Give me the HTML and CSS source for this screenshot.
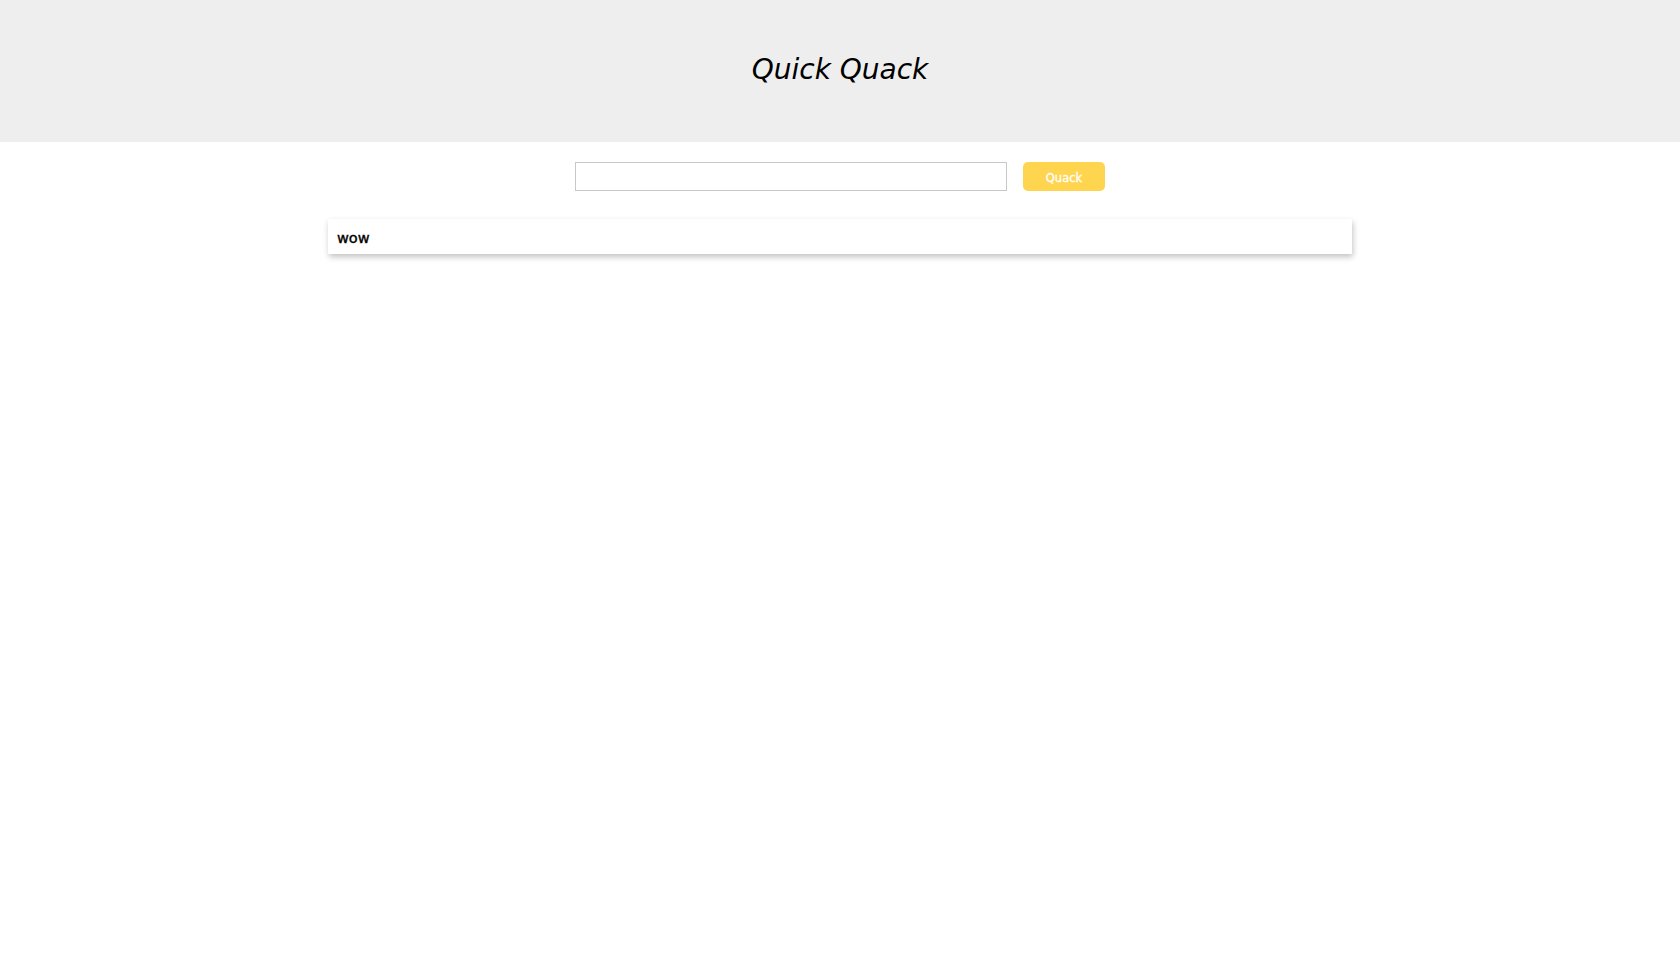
FILE: index.html
```html
<!DOCTYPE html>
<html>
<head>
<meta charset="utf-8">
<title>Quick Quack</title>
<link rel="stylesheet" href="styles.css">
</head>
<body>
<header class="header">
  <h1 class="title">Quick Quack</h1>
</header>
<main class="main">
  <form class="search">
    <input class="search-input" type="text">
    <button class="search-btn" type="button">Quack</button>
  </form>
  <div class="result">wow</div>
</main>
</body>
</html>
```
FILE: styles.css
```css
html, body {
  margin: 0;
  padding: 0;
  background: #ffffff;
}
body {
  font-family: "DejaVu Sans", Verdana, sans-serif;
  color: #000;
}
.header {
  background: #eeeeee;
  height: 142px;
  display: flex;
  align-items: center;
  justify-content: center;
}
.title {
  margin: 0;
  font-family: "DejaVu Sans", Verdana, sans-serif;
  font-style: italic;
  font-weight: normal;
  font-size: 28px;
  line-height: 1;
  padding-bottom: 2px;
}
.main {
  display: flex;
  flex-direction: column;
  align-items: center;
  padding-bottom: 40px;
}
.search {
  margin: 20px 0 0;
  display: flex;
  gap: 16px;
  align-items: center;
}
.search-input {
  box-sizing: border-box;
  width: 432px;
  height: 29px;
  border: 1px solid #c8c8c8;
  margin: 0;
  padding: 0 6px;
  outline: none;
  background: #fff;
}
.search-btn {
  box-sizing: border-box;
  width: 82px;
  height: 29px;
  border: none;
  border-radius: 5px;
  background: #ffd54f;
  color: #ffffff;
  font-family: "DejaVu Sans", Verdana, sans-serif;
  font-size: 11.5px;
  font-weight: normal;
  -webkit-text-stroke: 0.3px #fff;
  margin: 0;
  padding: 2px 0 0;
}
.result {
  box-sizing: border-box;
  margin-top: 28px;
  width: 1024px;
  height: 35px;
  padding: 2px 9px 0;
  display: flex;
  align-items: center;
  font-size: 14.5px;
  font-weight: normal;
  -webkit-text-stroke: 0.4px #000;
  background: #fff;
  box-shadow: 1px 3px 6px rgba(0, 0, 0, 0.24);
}
```
